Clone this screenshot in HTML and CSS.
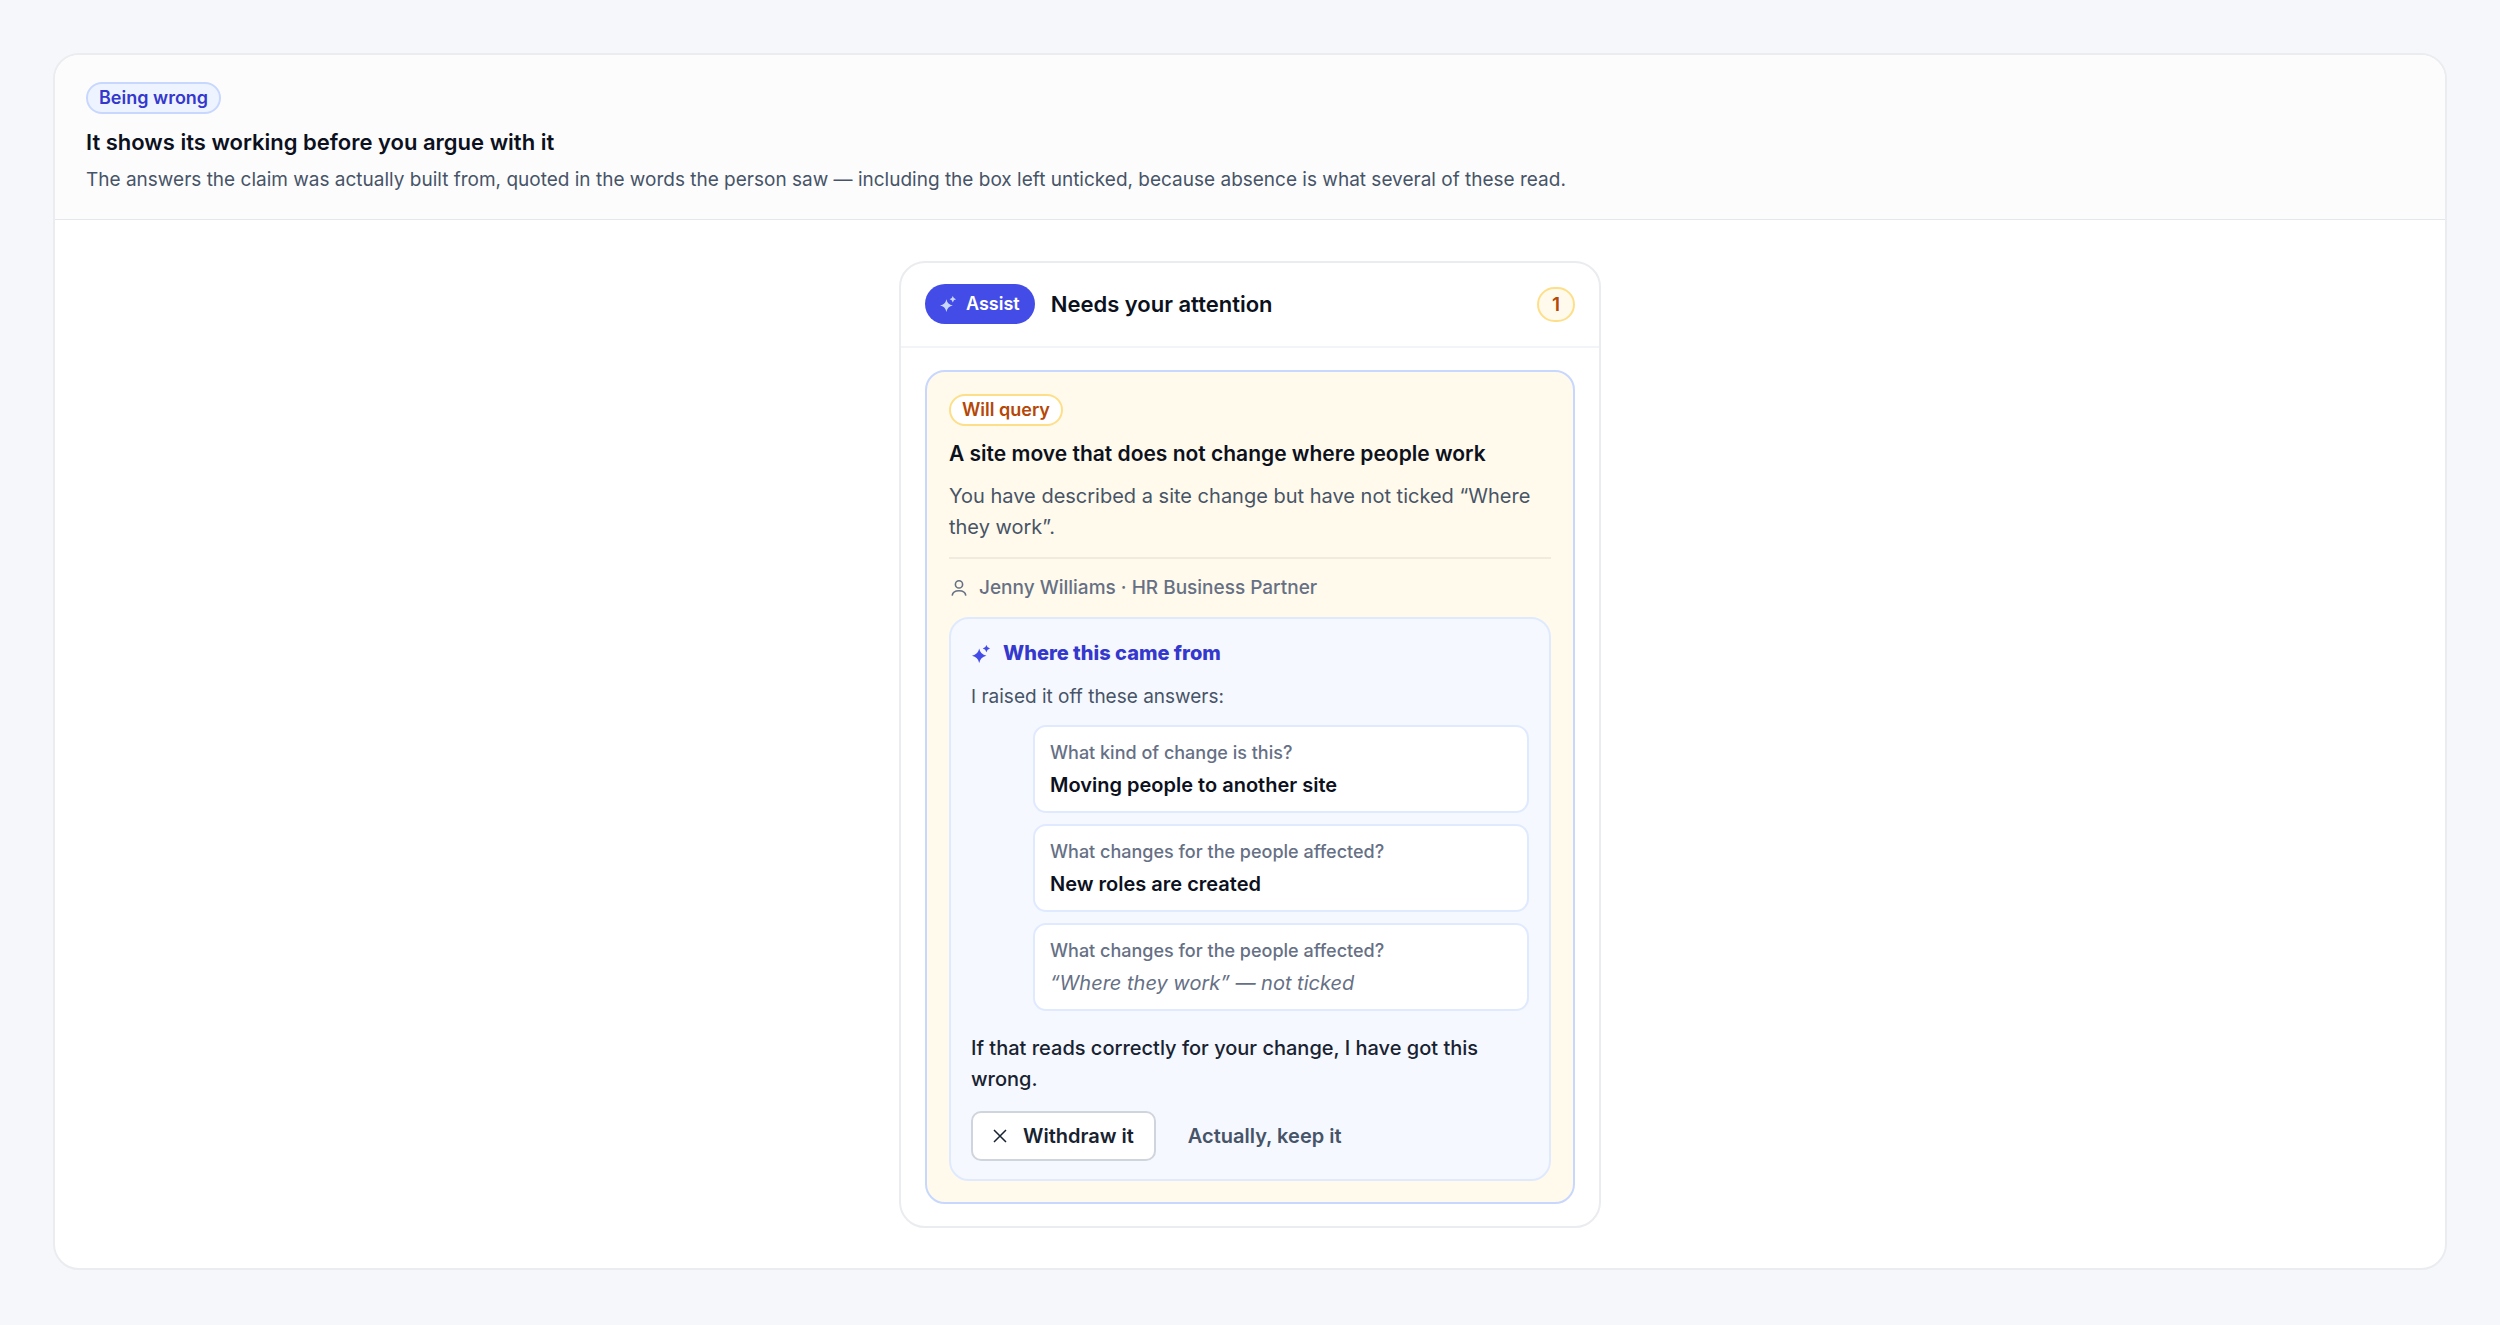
FILE: index.html
```html
<!DOCTYPE html>
<html lang="en">

  <head>
    <meta charset="utf-8">
    <meta name="viewport" content="width=device-width, initial-scale=1">
    <title>Being wrong</title>
    <link rel="stylesheet" href="styles.css">
  </head>

  <body>
    <main class="panel">
      <header class="panel-header">
        <span class="badge badge-indigo">Being wrong</span>
        <h1 class="panel-title">It shows its working before you argue with it</h1>
        <p class="panel-text">The answers the claim was actually built from, quoted in the words the person saw — including the box left unticked, because absence is what several of these read.</p>
      </header>

      <section class="card">
        <div class="card-header">
          <span class="assist">
            <svg class="assist-icon" viewBox="0 0 20 20" aria-hidden="true">
              <path d="M8 4 Q9.3 10.7 16 12 Q9.3 13.3 8 20 Q6.7 13.3 0 12 Q6.7 10.7 8 4Z"/>
              <path d="M16 0 Q16.7 3.3 20 4 Q16.7 4.7 16 8 Q15.3 4.7 12 4 Q15.3 3.3 16 0Z"/>
            </svg>
            Assist
          </span>
          <h2 class="card-title">Needs your attention</h2>
          <span class="count">1</span>
        </div>

        <div class="card-body">
          <article class="issue">
            <span class="badge badge-amber">Will query</span>
            <h3 class="issue-title">A site move that does not change where people work</h3>
            <p class="issue-text">You have described a site change but have not ticked “Where they work”.</p>
            <div class="person">
              <svg class="person-icon" viewBox="0 0 20 20" aria-hidden="true">
                <circle cx="10" cy="5.5" r="4.5"/>
                <path d="M1.5 19.5 C2 15.5 5.5 13.5 10 13.5 S18 15.5 18.5 19.5"/>
              </svg>
              Jenny Williams · HR Business Partner
            </div>

            <section class="source">
              <h4 class="source-title">
                <svg class="source-icon" viewBox="0 0 20 20" aria-hidden="true">
                  <path d="M8 4 Q9.3 10.7 16 12 Q9.3 13.3 8 20 Q6.7 13.3 0 12 Q6.7 10.7 8 4Z"/>
                  <path d="M16 0 Q16.7 3.3 20 4 Q16.7 4.7 16 8 Q15.3 4.7 12 4 Q15.3 3.3 16 0Z"/>
                </svg>
                Where this came from
              </h4>
              <p class="source-text">I raised it off these answers:</p>
              <ul class="answers">
                <li class="answer">
                  <span class="question">What kind of change is this?</span>
                  <strong class="reply">Moving people to another site</strong>
                </li>
                <li class="answer">
                  <span class="question">What changes for the people affected?</span>
                  <strong class="reply">New roles are created</strong>
                </li>
                <li class="answer">
                  <span class="question">What changes for the people affected?</span>
                  <em class="reply reply-empty">“Where they work” — not ticked</em>
                </li>
              </ul>
              <p class="source-ask">If that reads correctly for your change, I have got this wrong.</p>
              <div class="actions">
                <button type="button" class="btn btn-outline">
                  <svg class="btn-icon" viewBox="0 0 14 14" aria-hidden="true">
                    <path d="M1 1 L13 13 M13 1 L1 13"/>
                  </svg>
                  Withdraw it
                </button>
                <button type="button" class="btn btn-plain">Actually, keep it</button>
              </div>
            </section>
          </article>
        </div>
      </section>
    </main>
  </body>

</html>
```
FILE: styles.css
```css
* {
    box-sizing: border-box;
}
body {
    margin: 0;
    padding: 53px;
    background: #f5f7fb;
    color: #0c111d;
    font-family: Inter, "Liberation Sans", sans-serif;
    font-size: 19px;
}
h1, h2, h3, h4, p, ul {
    margin: 0;
    padding: 0;
}

/* outer panel */
.panel {
    padding-bottom: 40px;
    border: 2px solid #eaecf0;
    border-radius: 26px;
    background: #fff;
    overflow: hidden;
}
.panel-header {
    padding: 27px 31px 23px;
    border-bottom: 1px solid #e4e7ec;
    background: #fcfcfd;
}
.panel-title {
    margin-top: 10px;
    font-size: 22px;
    font-weight: 600;
    line-height: 36px;
}
.panel-text {
    margin-top: 4px;
    color: #475467;
    line-height: 32px;
}

/* badges */
.badge {
    display: block;
    width: fit-content;
    padding: 0 11px;
    border: 2px solid;
    border-radius: 16px;
    font-size: 18px;
    font-weight: 600;
    line-height: 28px;
}
.badge-indigo {
    border-color: #c7d7fe;
    background: #eef4ff;
    color: #3538cd;
}
.badge-amber {
    border-color: #fedf89;
    background: #fff;
    color: #b54708;
}

/* attention card */
.card {
    width: 100%;
    max-width: 702px;
    margin: 41px auto 0;
    border: 2px solid #eaecf0;
    border-radius: 26px;
}
.card-header {
    display: flex;
    align-items: center;
    gap: 16px;
    padding: 21px 24px 22px;
    border-bottom: 2px solid #f2f4f7;
}
.assist {
    display: flex;
    align-items: center;
    gap: 10px;
    padding: 0 15px;
    border-radius: 20px;
    background: #444ce7;
    color: #fff;
    font-size: 18px;
    font-weight: 600;
    line-height: 40px;
}
.assist-icon {
    width: 16px;
    height: 16px;
    fill: #c7d7fe;
}
.card-title {
    flex: 1;
    font-size: 22px;
    font-weight: 600;
    line-height: 32px;
}
.count {
    min-width: 38px;
    border: 2px solid #fedf89;
    border-radius: 18px;
    background: #fffaeb;
    color: #b54708;
    font-weight: 600;
    line-height: 31px;
    text-align: center;
}
.card-body {
    padding: 22px 24px;
}
.issue {
    padding: 22px 22px 21px;
    border: 2px solid #c7d7fe;
    border-radius: 20px;
    background: #fffaeb;
}
.issue-title {
    margin-top: 12px;
    font-size: 21px;
    font-weight: 600;
    line-height: 32px;
}
.issue-text {
    margin-top: 11px;
    color: #475467;
    font-size: 20px;
    line-height: 31px;
}
.person {
    display: flex;
    align-items: center;
    gap: 10px;
    margin: 14px 0 15px;
    padding-top: 15px;
    border-top: 2px solid #efebdf;
    color: #667085;
    font-weight: 500;
    line-height: 28px;
}
.person-icon {
    width: 20px;
    height: 16px;
    fill: none;
    stroke: #667085;
    stroke-width: 2;
}

/* where the claim came from */
.source {
    padding: 19px 20px 18px;
    border: 2px solid #e0eaff;
    border-radius: 20px;
    background: #f5f8ff;
}
.source-title {
    display: flex;
    align-items: center;
    gap: 12px;
    color: #3538cd;
    font-size: 20px;
    font-weight: 800;
    line-height: 31px;
}
.source-icon {
    width: 20px;
    height: 18px;
    fill: #444ce7;
}
.source-text {
    margin-top: 12px;
    color: #475467;
    line-height: 31px;
}
.answers {
    display: flex;
    flex-direction: column;
    gap: 11px;
    margin: 13px 0 22px;
    padding-left: 62px;
    list-style: none;
}
.answer {
    padding: 10px 15px;
    border: 2px solid #e0eaff;
    border-radius: 13px;
    background: #fff;
}
.question, .reply {
    display: block;
}
.question {
    color: #667085;
    font-size: 18px;
    font-weight: 500;
    line-height: 32px;
}
.reply {
    font-size: 20px;
    font-weight: 600;
    line-height: 32px;
}
.reply-empty {
    color: #667085;
    font-weight: 400;
}
.source-ask {
    color: #182230;
    font-size: 20px;
    font-weight: 500;
    line-height: 31px;
}
.actions {
    display: flex;
    gap: 10px;
    margin-top: 16px;
}
.btn {
    display: flex;
    align-items: center;
    gap: 16px;
    padding: 0 20px;
    border: 2px solid transparent;
    border-radius: 10px;
    font-family: inherit;
    font-size: 20px;
    font-weight: 600;
    line-height: 46px;
    cursor: pointer;
}
.btn-outline {
    border-color: #d0d5dd;
    background: #fff;
    color: #182230;
}
.btn-plain {
    background: none;
    color: #475467;
}
.btn-icon {
    width: 14px;
    height: 14px;
    fill: none;
    stroke: currentColor;
    stroke-width: 1.5;
}
```
